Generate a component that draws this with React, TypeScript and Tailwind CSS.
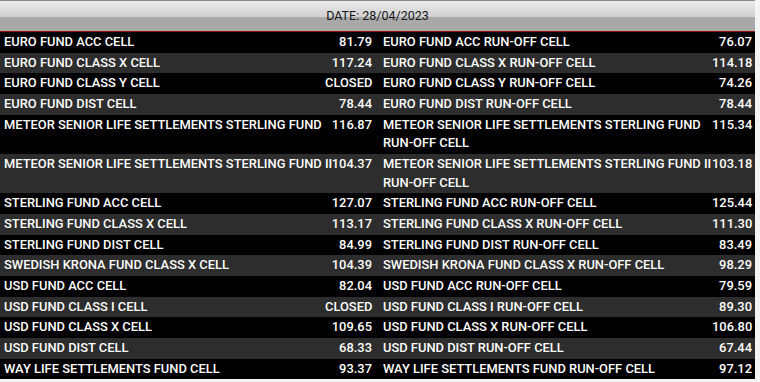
import React from "react";

type Row = { a: string; av: string; b: string; bv: string };

const rows: Row[] = [
  { a: "EURO FUND ACC CELL", av: "81.79", b: "EURO FUND ACC RUN-OFF CELL", bv: "76.07" },
  { a: "EURO FUND CLASS X CELL", av: "117.24", b: "EURO FUND CLASS X RUN-OFF CELL", bv: "114.18" },
  { a: "EURO FUND CLASS Y CELL", av: "CLOSED", b: "EURO FUND CLASS Y RUN-OFF CELL", bv: "74.26" },
  { a: "EURO FUND DIST CELL", av: "78.44", b: "EURO FUND DIST RUN-OFF CELL", bv: "78.44" },
  { a: "METEOR SENIOR LIFE SETTLEMENTS STERLING FUND", av: "116.87", b: "METEOR SENIOR LIFE SETTLEMENTS STERLING FUND RUN-OFF CELL", bv: "115.34" },
  { a: "METEOR SENIOR LIFE SETTLEMENTS STERLING FUND II", av: "104.37", b: "METEOR SENIOR LIFE SETTLEMENTS STERLING FUND II RUN-OFF CELL", bv: "103.18" },
  { a: "STERLING FUND ACC CELL", av: "127.07", b: "STERLING FUND ACC RUN-OFF CELL", bv: "125.44" },
  { a: "STERLING FUND CLASS X CELL", av: "113.17", b: "STERLING FUND CLASS X RUN-OFF CELL", bv: "111.30" },
  { a: "STERLING FUND DIST CELL", av: "84.99", b: "STERLING FUND DIST RUN-OFF CELL", bv: "83.49" },
  { a: "SWEDISH KRONA FUND CLASS X CELL", av: "104.39", b: "SWEDISH KRONA FUND CLASS X RUN-OFF CELL", bv: "98.29" },
  { a: "USD FUND ACC CELL", av: "82.04", b: "USD FUND ACC RUN-OFF CELL", bv: "79.59" },
  { a: "USD FUND CLASS I CELL", av: "CLOSED", b: "USD FUND CLASS I RUN-OFF CELL", bv: "89.30" },
  { a: "USD FUND CLASS X CELL", av: "109.65", b: "USD FUND CLASS X RUN-OFF CELL", bv: "106.80" },
  { a: "USD FUND DIST CELL", av: "68.33", b: "USD FUND DIST RUN-OFF CELL", bv: "67.44" },
  { a: "WAY LIFE SETTLEMENTS FUND CELL", av: "93.37", b: "WAY LIFE SETTLEMENTS FUND RUN-OFF CELL", bv: "97.12" },
];

export default function App() {
  return (
    <div
      className="w-[760px] h-[382px] bg-[#f4f4f4] overflow-hidden"
      style={{ fontFamily: "Roboto, 'Liberation Sans', sans-serif" }}
    >
      <div className="w-[755px]">
        <div className="h-[32px] flex flex-col border-t border-[#8a8a8a] border-b border-b-[#8e1414]">
          <div className="relative flex-1 flex flex-col">
            <div className="h-[16px] bg-gradient-to-b from-[#ebebeb] to-[#d0d0d0]" />
            <div className="flex-1 bg-[#a9a9a9]" />
            <div className="absolute inset-0 flex items-center justify-center pt-[1px] text-[12.5px] text-[#161616]">
              DATE: 28/04/2023
            </div>
          </div>
        </div>
        <div className="flex flex-col text-white text-[12.9px] font-medium leading-[18.67px]">
          {rows.map((r, i) => (
            <div
              key={i}
              className={`flex py-[1px] ${i % 2 === 0 ? "bg-black" : "bg-[#2d2d2d]"}`}
            >
              <div className="w-[325px] shrink-0 pl-[4px] whitespace-nowrap">{r.a}</div>
              <div className="w-[47px] shrink-0 text-right whitespace-nowrap">{r.av}</div>
              <div className="w-[340px] shrink-0 pl-[11px]">{r.b}</div>
              <div className="flex-1 pr-[3px] text-right whitespace-nowrap">{r.bv}</div>
            </div>
          ))}
        </div>
      </div>
    </div>
  );
}
